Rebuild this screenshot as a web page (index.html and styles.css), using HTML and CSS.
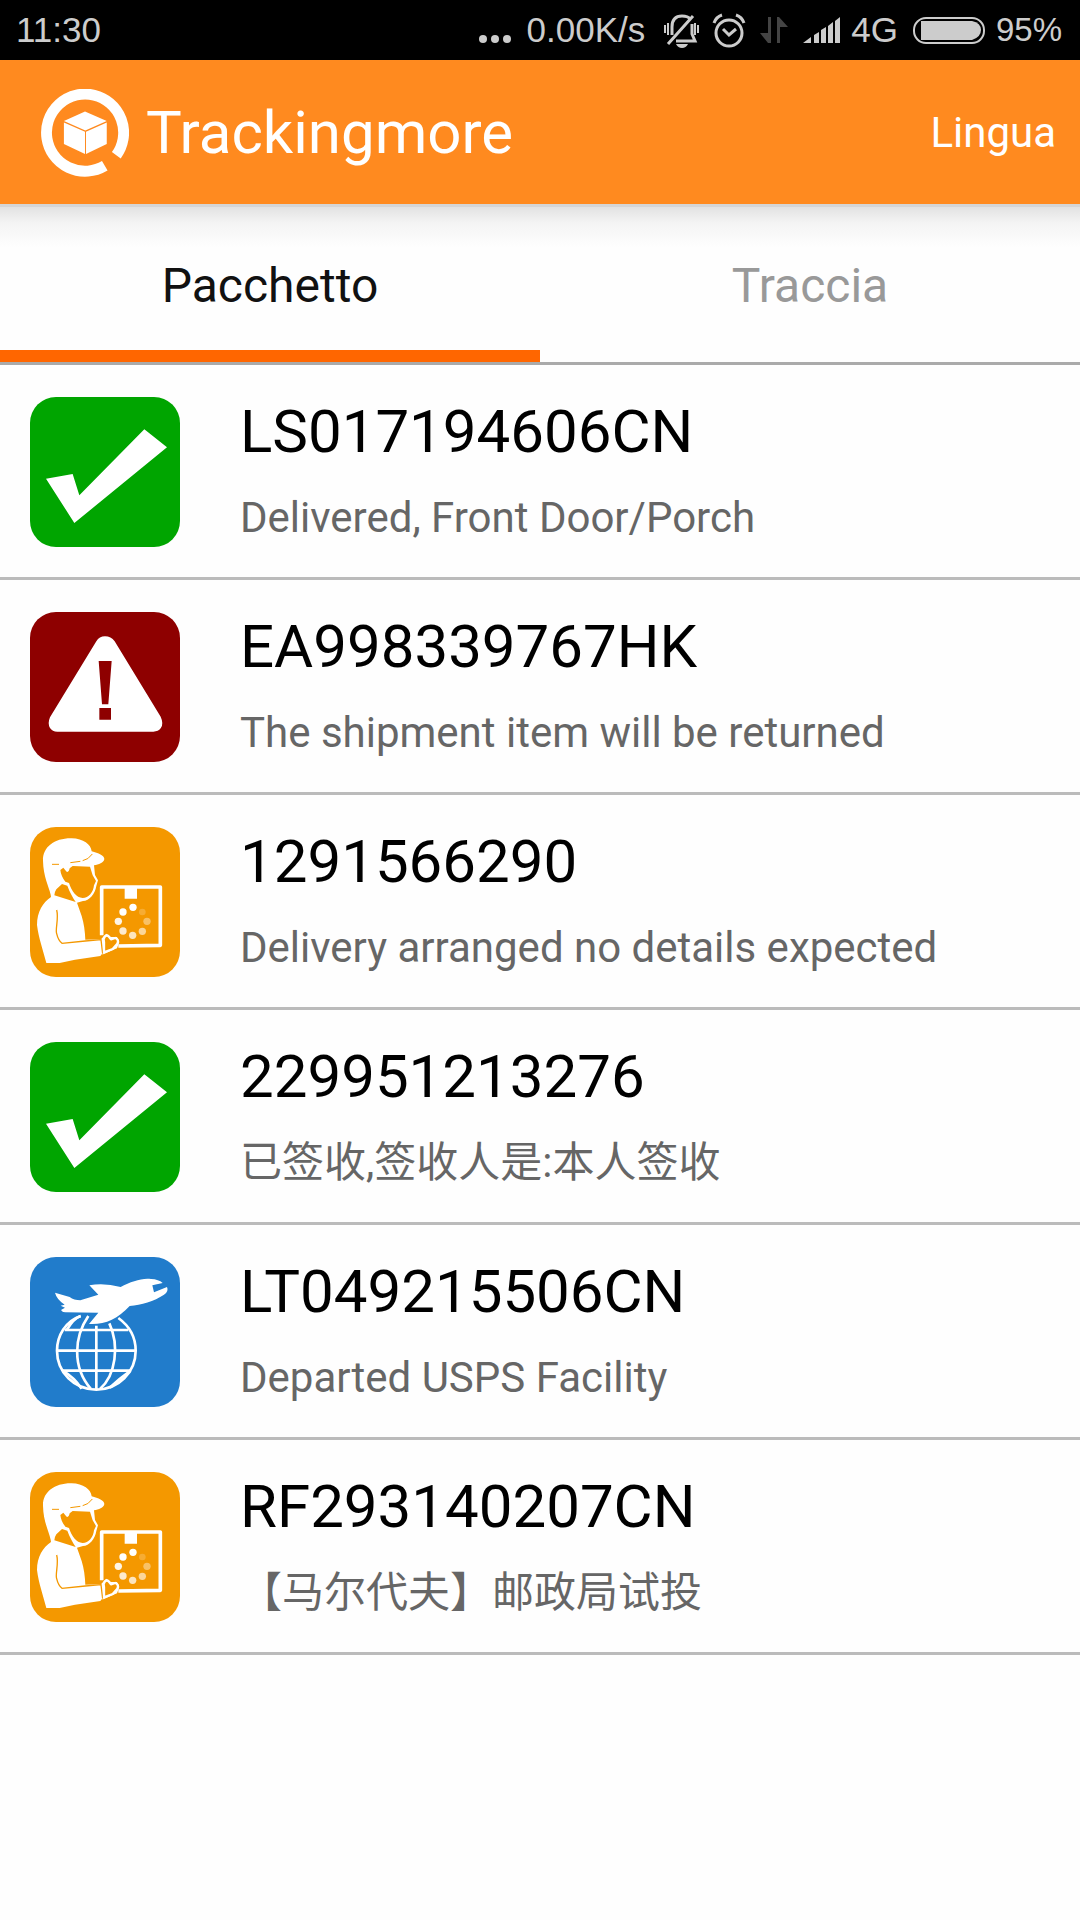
FILE: index.html
```html
<!DOCTYPE html>
<html lang="it">
<head>
	<meta charset="UTF-8">
	<meta name="viewport" content="width=device-width">
	<title>Trackingmore</title>
	<link rel="stylesheet" href="styles.css">
</head>
<body>

	<!-- status icons, used by the list below -->
	<svg class="defs" aria-hidden="true">
		<symbol id="delivered" viewBox="30 36 450 450">
			<path fill="#fff" d="M78 281L158 267L178 331L373 133L441 187L163 414Z"/>
		</symbol>
		<symbol id="alert" viewBox="30 36 450 450">
			<path fill="#fff" d="M229 124Q238 109 255 109Q273 109 284 124L422 350Q432 372 422 385Q415 395 400 395H112Q97 395 90 384Q82 371 90 352Z"/>
			<path fill="#8e0000" d="M236 183H275L265 313H246ZM238 324H273V359H238Z"/>
		</symbol>
		<symbol id="courier" viewBox="30 36 450 450">
			<!-- cap, neck and jacket -->
			<path fill="#fff" d="M92 239C86 212 70 185 69 137C68 96 104 69 155 70C190 71 213 88 215 109C235 114 253 122 253 132C251 144 236 148 222 151L225 180L234 196L229 213C225 237 208 258 189 258L171 263L185 303C192 325 195 350 196 374L243 373L259 356L272 366L291 366L298 381L291 400L250 418L245 418L241 423L165 434L119 444L79 444C69 405 56 370 51 330C51 290 69 262 93 246Z"/>
			<!-- face -->
			<path fill="#f49800" d="M121 165L130 158L138 168C142 174 147 170 149 160L158 153L210 155L218 181L228 198L222 211C220 232 206 249 188 249C169 248 155 229 147 204L136 200C128 190 122 177 121 165Z"/>
			<path fill="#f49800" d="M126 207L142 212C149 232 159 248 167 261L103 241Q103 232 109 223Z"/>
			<path fill="none" stroke="#f49800" stroke-width="3" d="M96 148H117M151 143L181 139M188 137Q205 134 217 117"/>
			<path fill="none" stroke="#f49800" stroke-width="4" d="M110 285C117 311 105 343 110 356Q115 377 126 385L196 378L243 374L248 416"/>
			<!-- parcel -->
			<path fill="none" stroke="#fff" stroke-width="11" stroke-linejoin="round" d="M245 361V216H421V391L295 393"/>
			<path fill="#fff" d="M314 216H351V251H314Z"/>
			<path fill="#f49800" stroke="#fff" stroke-width="7" stroke-linejoin="round" d="M252 381C247 366 260 356 267 365L273 373L286 369Q298 374 292 386L278 402L252 412Z"/>
			<g fill="#fff">
				<circle cx="339" cy="277" r="11"/>
				<circle cx="309" cy="291" r="11"/>
				<circle cx="295" cy="319" r="11" opacity=".9"/>
				<circle cx="309" cy="348" r="11" opacity=".8"/>
				<circle cx="338" cy="361" r="11" opacity=".75"/>
				<circle cx="367" cy="349" r="11" opacity=".6"/>
				<circle cx="381" cy="319" r="11" opacity=".4"/>
				<circle cx="367" cy="291" r="10" opacity=".2"/>
			</g>
		</symbol>
		<symbol id="transit" viewBox="30 36 450 450">
			<g fill="none" stroke="#fff" stroke-width="8">
				<path d="M182 213C136 229 111 272 111 317C111 382 163 434 229 434S347 382 347 317C347 275 328 243 295 219"/>
				<path d="M229 242V434M112 317H346M134 255H325M128 377H332"/>
				<path d="M182 213C165 218 151 237 140 255M205 213C163 275 155 365 213 432M268 235C299 302 287 391 240 432M128 377Q162 397 185 431M332 377Q300 400 269 428"/>
			</g>
			<path fill="#fff" d="M105 143L149 156Q162 166 181 166L235 149L208 121Q252 113 302 126C333 110 366 98 393 102Q416 103 428 114L397 121L402 142L441 126Q447 139 432 149C402 169 364 179 329 183C292 223 252 240 207 237L235 203L136 202Q122 199 124 194L135 188L122 182L134 179Q110 163 105 143Z"/>
		</symbol>
	</svg>

	<div class="statusbar">
		<span>11:30</span>
		<div class="status-right">
			<svg width="33" height="30" fill="#ccc"><circle cx="4" cy="24" r="4"/><circle cx="16" cy="24" r="4"/><circle cx="28" cy="24" r="4"/></svg>
			<span class="speed">0.00K/s</span>
			<svg width="34" height="34" fill="none" stroke="#ccc" stroke-width="3">
				<path d="M8 22V14Q8 3 18 3Q24 3 26 6M28 11V21L31 28H12M4 31L29 3"/>
				<path stroke-width="2" d="M1 12V20M4 10V22M31 10V22M34 12V20"/>
				<path fill="#ccc" stroke="none" d="M12 31H24Q22 35 18 35T12 31Z"/>
			</svg>
			<svg width="32" height="34" fill="none" stroke="#ccc" stroke-width="3">
				<circle cx="16" cy="20" r="13"/>
				<path d="M10 16L16 22L23 16M1 10Q3 4 9 2M23 2Q29 4 31 10"/>
			</svg>
			<svg width="28" height="30" fill="#444"><path d="M8 2H11V28H8L0 18H8ZM17 2H19L28 12H20V28H17Z"/></svg>
			<svg width="37" height="30" fill="#ccc"><path d="M0 28L8 22V28ZM11 20L16 17V28H11ZM18 15L23 12V28H18ZM25 11L30 7V28H25ZM32 6L37 2V28H32Z"/></svg>
			<span class="network">4G</span>
			<svg width="72" height="30">
				<rect x="1" y="3" width="70" height="25" rx="12" fill="none" stroke="#ccc" stroke-width="2"/>
				<path fill="#ccc" d="M8 6H59Q68 8 68 15T59 25H8Z"/>
			</svg>
			<span class="battery">95%</span>
		</div>
	</div>

	<header class="header">
		<svg class="logo" viewBox="62 54 266 267">
			<path fill="none" stroke="#fff" stroke-width="33" d="M290 255A117 117 0 1 0 255 287"/>
			<path fill="#fff" d="M195 122L261 151L196 180L131 151ZM131 156L195 184V251L131 221ZM198 184L261 156V221L198 251Z"/>
		</svg>
		<h1>Trackingmore</h1>
		<button type="button" class="lang">Lingua</button>
	</header>

	<nav class="tabs">
		<button type="button" class="tab active">Pacchetto</button>
		<button type="button" class="tab">Traccia</button>
	</nav>

	<ul class="list">
		<li class="item">
			<svg class="icon green"><use href="#delivered"/></svg>
			<div class="info">
				<h2>LS017194606CN</h2>
				<p>Delivered, Front Door/Porch</p>
			</div>
		</li>
		<li class="item">
			<svg class="icon red"><use href="#alert"/></svg>
			<div class="info">
				<h2>EA998339767HK</h2>
				<p>The shipment item will be returned</p>
			</div>
		</li>
		<li class="item">
			<svg class="icon orange"><use href="#courier"/></svg>
			<div class="info">
				<h2>1291566290</h2>
				<p>Delivery arranged no details expected</p>
			</div>
		</li>
		<li class="item">
			<svg class="icon green"><use href="#delivered"/></svg>
			<div class="info">
				<h2>229951213276</h2>
				<p lang="zh-CN">已签收,签收人是:本人签收</p>
			</div>
		</li>
		<li class="item">
			<svg class="icon blue"><use href="#transit"/></svg>
			<div class="info">
				<h2>LT049215506CN</h2>
				<p>Departed USPS Facility</p>
			</div>
		</li>
		<li class="item">
			<svg class="icon orange"><use href="#courier"/></svg>
			<div class="info">
				<h2>RF293140207CN</h2>
				<p lang="zh-CN">【马尔代夫】邮政局试投</p>
			</div>
		</li>
	</ul>

</body>
</html>
```
FILE: styles.css
```css
* {
	box-sizing: border-box;
}
body {
	margin: 0;
	background: #fefefe;
	font-family: Roboto, "Noto Sans CJK SC", sans-serif;
	color: #000;
}
h1, h2, p, ul {
	margin: 0;
	padding: 0;
	font-weight: 400;
}
button {
	border: 0;
	padding: 0;
	background: none;
	font-family: inherit;
	cursor: pointer;
}
.defs {
	display: none;
}

.statusbar {
	display: flex;
	justify-content: space-between;
	align-items: center;
	height: 60px;
	padding: 0 18px 0 16px;
	background: #000;
	color: #ccc;
	font-family: "Liberation Sans", Arial, sans-serif;
	font-size: 35px;
	line-height: 60px;
}
.status-right {
	display: flex;
	align-items: center;
	gap: 15px;
}
.status-right svg {
	overflow: visible;
}
.speed {
	margin-right: 4px;
}
.network {
	margin-left: -4px;
}
.battery {
	margin-left: -4px;
	font-size: 33px;
}

.header {
	display: flex;
	align-items: center;
	height: 144px;
	padding: 2px 24px 0 41px;
	background: #ff8a1f;
	color: #fff;
}
.logo {
	width: 88px;
	height: 88px;
	margin-right: 17px;
}
.header h1 {
	font-size: 60px;
	line-height: 70px;
}
.lang {
	margin-left: auto;
	color: #fff;
	font-size: 42px;
	line-height: 50px;
}

.tabs {
	display: flex;
	height: 161px;
	border-top: 3px solid #d5d5d5;
	border-bottom: 3px solid #aaa;
	background: linear-gradient(#e2e2e2, #f4f4f4 16px, #fefefe 40px);
}
.tab {
	flex: 1;
	padding-top: 14px;
	border-bottom: 12px solid transparent;
	color: #999;
	font-size: 48px;
	line-height: 56px;
}
.tab.active {
	border-bottom-color: #ff6600;
	color: #111;
}

.list {
	list-style: none;
}
.item {
	display: flex;
	gap: 60px;
	padding: 32px 30px 30px;
	border-bottom: 3px solid #bbb;
}
.icon {
	flex: none;
	width: 150px;
	height: 150px;
	border-radius: 26px;
}
.green { background: #00a500; }
.red { background: #8e0000; }
.orange { background: #f49800; }
.blue { background: #217ccb; }
.info h2 {
	margin-bottom: 26px;
	font-size: 60px;
	line-height: 70px;
}
.info p {
	color: #666;
	font-size: 42px;
	line-height: 50px;
}
```
